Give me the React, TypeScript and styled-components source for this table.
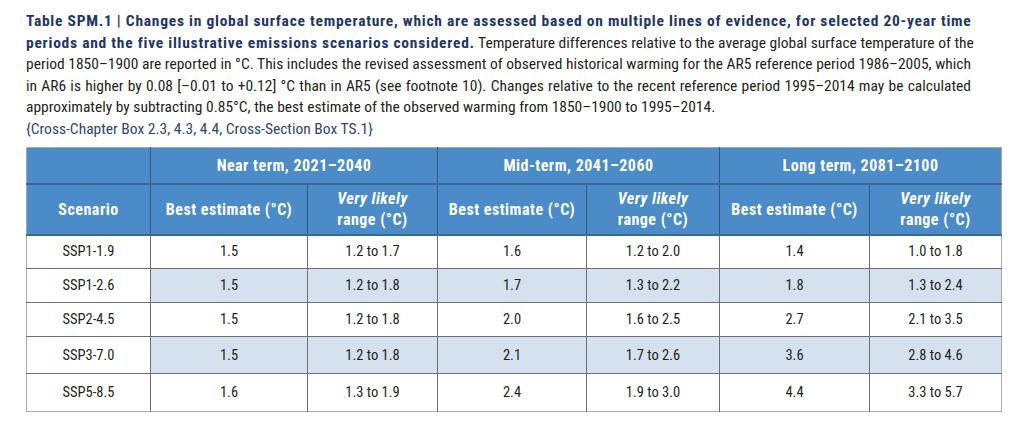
import React from "react";
import styled, { createGlobalStyle } from "styled-components";

const GlobalStyle = createGlobalStyle`
  html, body { margin: 0; padding: 0; background: #ffffff; }
  body { font-family: "Roboto Condensed", "Open Sans", sans-serif; color: #231f20; }
`;

const Page = styled.div`
  width: 1022px;
  height: 433px;
  padding: 11px 0 0 26px;
  box-sizing: border-box;
  overflow: hidden;
`;

const Caption = styled.div`
  font-size: 15.5px;
  line-height: 21.6px;
  white-space: nowrap;
  margin-bottom: 6px;
`;

const CaptionLine = styled.div<{ $justify?: boolean }>`
  width: 945px;
  text-align: ${(p) => (p.$justify ? "justify" : "left")};
  text-align-last: ${(p) => (p.$justify ? "justify" : "left")};
`;

const Title = styled.span`
  font-weight: 700;
  color: #1e3768;
  letter-spacing: 0.75px;
`;

const Reference = styled.div`
  color: #2d4675;
`;

const Table = styled.table`
  border-collapse: collapse;
  table-layout: fixed;
  width: 975px;
  border: 1px solid #a9a9a9;
  font-size: 14.5px;
`;

const HeadCell = styled.th<{ $top?: boolean }>`
  background: #4a8bc8;
  color: #ffffff;
  font-weight: 700;
  font-size: 16px;
  letter-spacing: 0.5px;
  line-height: 21px;
  text-align: center;
  padding: 0;
  height: ${(p) => (p.$top ? "35px" : "49px")};
  border-left: 1px solid #35577c;
  border-right: 1px solid #35577c;
  border-bottom: 2px solid #3e6894;
  &:first-child { border-left: none; }
  &:last-child { border-right: none; }
`;

const Italic = styled.span`
  display: block;
  font-style: italic;
`;

const BodyRow = styled.tr<{ $shade: boolean; $h: number }>`
  height: ${(p) => p.$h}px;
  td { background: ${(p) => (p.$shade ? "#d5e1ef" : "#ffffff")}; }
  td:first-child { background: #ffffff; }
`;

const Cell = styled.td`
  text-align: center;
  padding: 0;
  border: 1.5px solid #6e6e6e;
  &:first-child { border-left: none; }
  &:last-child { border-right: none; }
  tr:last-child > & { border-bottom: none; }
`;

const cols = [124, 157, 130, 149, 133, 150, 132];

const rows: { name: string; vals: string[]; h: number }[] = [
  { name: "SSP1-1.9", vals: ["1.5", "1.2 to 1.7", "1.6", "1.2 to 2.0", "1.4", "1.0 to 1.8"], h: 34 },
  { name: "SSP1-2.6", vals: ["1.5", "1.2 to 1.8", "1.7", "1.3 to 2.2", "1.8", "1.3 to 2.4"], h: 34 },
  { name: "SSP2-4.5", vals: ["1.5", "1.2 to 1.8", "2.0", "1.6 to 2.5", "2.7", "2.1 to 3.5"], h: 34 },
  { name: "SSP3-7.0", vals: ["1.5", "1.2 to 1.8", "2.1", "1.7 to 2.6", "3.6", "2.8 to 4.6"], h: 37 },
  { name: "SSP5-8.5", vals: ["1.6", "1.3 to 1.9", "2.4", "1.9 to 3.0", "4.4", "3.3 to 5.7"], h: 38 },
];

const periods = ["Near term, 2021–2040", "Mid-term, 2041–2060", "Long term, 2081–2100"];

export default function App() {
  return (
    <Page>
      <GlobalStyle />
      <Caption>
        <CaptionLine $justify>
          <Title>
            Table SPM.1 | Changes in global surface temperature, which are assessed based on multiple lines of evidence, for selected 20-year time
          </Title>
        </CaptionLine>
        <CaptionLine $justify>
          <Title>periods and the five illustrative emissions scenarios considered.</Title> Temperature differences relative to the average global surface temperature of the
        </CaptionLine>
        <CaptionLine $justify>
          period 1850–1900 are reported in °C. This includes the revised assessment of observed historical warming for the AR5 reference period 1986–2005, which
        </CaptionLine>
        <CaptionLine $justify>
          in AR6 is higher by 0.08 [–0.01 to +0.12] °C than in AR5 (see footnote 10). Changes relative to the recent reference period 1995–2014 may be calculated
        </CaptionLine>
        <CaptionLine>
          approximately by subtracting 0.85°C, the best estimate of the observed warming from 1850–1900 to 1995–2014.
        </CaptionLine>
        <Reference>{"{Cross-Chapter Box 2.3, 4.3, 4.4, Cross-Section Box TS.1}"}</Reference>
      </Caption>
      <Table>
        <colgroup>
          {cols.map((w, i) => (
            <col key={i} style={{ width: w }} />
          ))}
        </colgroup>
        <thead>
          <tr>
            <HeadCell $top />
            {periods.map((p) => (
              <HeadCell $top key={p} colSpan={2}>
                {p}
              </HeadCell>
            ))}
          </tr>
          <tr>
            <HeadCell>Scenario</HeadCell>
            {periods.map((p) => (
              <React.Fragment key={p}>
                <HeadCell>Best estimate (°C)</HeadCell>
                <HeadCell>
                  <Italic>Very likely</Italic>
                  range (°C)
                </HeadCell>
              </React.Fragment>
            ))}
          </tr>
        </thead>
        <tbody>
          {rows.map((r, i) => (
            <BodyRow key={r.name} $shade={i % 2 === 1} $h={r.h}>
              <Cell>{r.name}</Cell>
              {r.vals.map((v, j) => (
                <Cell key={j}>{v}</Cell>
              ))}
            </BodyRow>
          ))}
        </tbody>
      </Table>
    </Page>
  );
}
